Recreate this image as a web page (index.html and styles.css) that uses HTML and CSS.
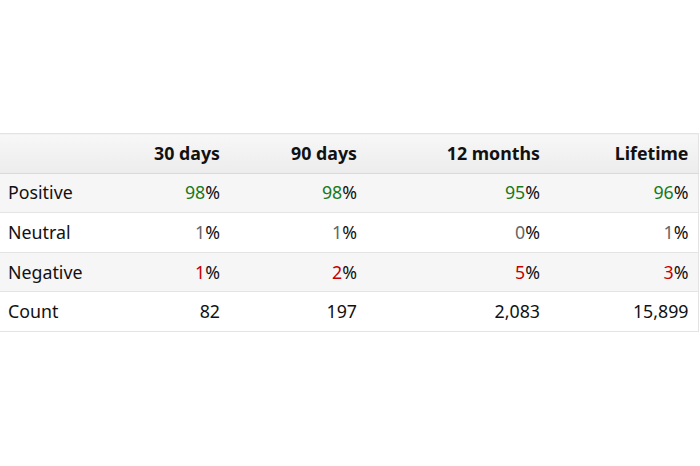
FILE: index.html
```html
<!DOCTYPE html>
<html>
<head>
<meta charset="utf-8">
<link rel="stylesheet" href="styles.css">
</head>
<body>
<div class="page">
  <table class="stats">
    <colgroup>
      <col class="c-label"><col class="c-30"><col class="c-90"><col class="c-12"><col class="c-life">
    </colgroup>
    <thead>
      <tr class="head">
        <th></th><th>30 days</th><th>90 days</th><th>12 months</th><th>Lifetime</th>
      </tr>
    </thead>
    <tbody>
      <tr class="alt">
        <td class="label">Positive</td>
        <td><span class="pos">98</span>%</td>
        <td><span class="pos">98</span>%</td>
        <td><span class="pos">95</span>%</td>
        <td><span class="pos">96</span>%</td>
      </tr>
      <tr>
        <td class="label">Neutral</td>
        <td><span class="neu">1</span>%</td>
        <td><span class="neu">1</span>%</td>
        <td><span class="neu">0</span>%</td>
        <td><span class="neu">1</span>%</td>
      </tr>
      <tr class="alt">
        <td class="label">Negative</td>
        <td><span class="neg">1</span>%</td>
        <td><span class="neg">2</span>%</td>
        <td><span class="neg">5</span>%</td>
        <td><span class="neg">3</span>%</td>
      </tr>
      <tr>
        <td class="label">Count</td>
        <td>82</td>
        <td>197</td>
        <td>2,083</td>
        <td>15,899</td>
      </tr>
    </tbody>
  </table>
</div>
</body>
</html>
```
FILE: styles.css
```css
html, body {
  margin: 0;
  padding: 0;
  background: #ffffff;
}
.page {
  padding-top: 133px;
  font-family: "Noto Sans", "Open Sans", sans-serif;
  font-size: 17.8px;
  line-height: 24px;
  color: #111111;
}
.stats {
  width: 698px;
  border-collapse: collapse;
  table-layout: fixed;
}
.c-label { width: 92px; }
.c-30 { width: 137px; }
.c-90 { width: 137px; }
.c-12 { width: 183px; }
.c-life { width: 149px; }
.stats th, .stats td {
  height: 37.6px;
  padding: 0 9px 1px 8px;
  text-align: right;
  border-top: 1px solid #e4e4e4;
  border-bottom: 1px solid #e4e4e4;
  white-space: nowrap;
}
.stats tr > :last-child { border-right: 1px solid #e4e4e4; }
.head th {
  font-weight: 700;
  background: linear-gradient(#f7f7f7, #ececec);
  border-bottom: 1px solid #dadada;
}
.stats td.label { text-align: left; }
.alt td { background: #f6f6f6; }
.pos { color: #1a7a1a; }
.neu { color: #666666; }
.neg { color: #c40000; }
```
